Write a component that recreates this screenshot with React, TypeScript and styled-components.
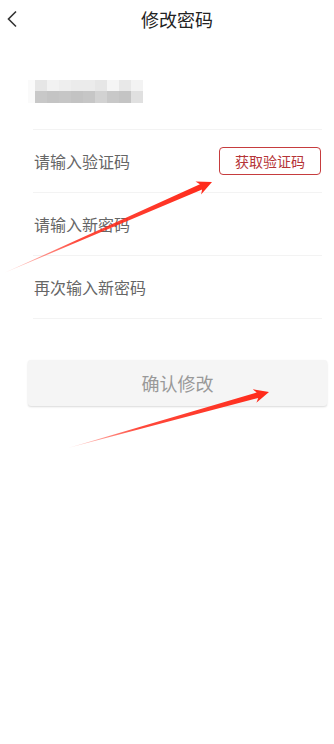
import React from 'react';
import styled, { createGlobalStyle } from 'styled-components';

const GlobalStyle = createGlobalStyle`
  html, body {
    margin: 0;
    padding: 0;
    background: #fff;
    font-family: "Noto Sans CJK SC", "Noto Sans", sans-serif;
  }
`;

const mosaic = [
  ['#fafafa', '#e6e6e6', '#f2f2f2', '#eeeeee', '#ebebeb', '#ebebeb', '#e6e6e6', '#f5f5f5', '#e8e8e8', '#f3f3f3'],
  ['#fafafa', '#c8c8c8', '#c4c4c4', '#c6c6c6', '#c3c3c3', '#c6c6c6', '#d2d2d2', '#c8c8c8', '#c4c4c4', '#e0e0e0'],
];

type Pt = [number, number];

const arrowPoints = (tail: Pt, tip: Pt) => {
  const dx = tip[0] - tail[0];
  const dy = tip[1] - tail[1];
  const len = Math.hypot(dx, dy);
  const ux = dx / len;
  const uy = dy / len;
  const nx = -uy;
  const ny = ux;
  const head = 15;
  const bx = tip[0] - ux * head;
  const by = tip[1] - uy * head;
  const p = (x: number, y: number) => `${x.toFixed(1)},${y.toFixed(1)}`;
  return [
    p(tail[0], tail[1]),
    p(bx + nx * 2.8 + ux * 3, by + ny * 2.8 + uy * 3),
    p(bx + nx * 7, by + ny * 7),
    p(tip[0], tip[1]),
    p(bx - nx * 7, by - ny * 7),
    p(bx - nx * 2.8 + ux * 3, by - ny * 2.8 + uy * 3),
  ].join(' ');
};

const App = () => {
  return (
    <Page>
      <GlobalStyle />
      <Header>
        <Back>
          <svg width="12" height="18" viewBox="0 0 12 18">
            <path d="M10 1.5 L2.5 9 L10 16.5" fill="none" stroke="#333" strokeWidth="1.6" />
          </svg>
        </Back>
        <Title>修改密码</Title>
      </Header>

      <Form>
        <PhoneRow>
          <Mosaic>
            {mosaic.map((row, r) =>
              row.map((c, i) => <Cell key={`${r}-${i}`} $first={i === 0} style={{ background: c }} />)
            )}
          </Mosaic>
        </PhoneRow>
        <Row>
          <Label>请输入验证码</Label>
          <CodeButton>获取验证码</CodeButton>
        </Row>
        <Row>
          <Label>请输入新密码</Label>
        </Row>
        <Row>
          <Label>再次输入新密码</Label>
        </Row>
      </Form>

      <Submit>确认修改</Submit>

      <Overlay width="334" height="744" viewBox="0 0 334 744">
        <defs>
          <linearGradient id="g1" x1="4" y1="273" x2="212" y2="182" gradientUnits="userSpaceOnUse">
            <stop offset="0" stopColor="#ff2a1a" stopOpacity="0.15" />
            <stop offset="0.35" stopColor="#ff2a1a" stopOpacity="0.85" />
            <stop offset="1" stopColor="#ff2a1a" />
          </linearGradient>
          <linearGradient id="g2" x1="68" y1="448" x2="269" y2="392" gradientUnits="userSpaceOnUse">
            <stop offset="0" stopColor="#ff2a1a" stopOpacity="0.15" />
            <stop offset="0.35" stopColor="#ff2a1a" stopOpacity="0.85" />
            <stop offset="1" stopColor="#ff2a1a" />
          </linearGradient>
        </defs>
        <polygon points={arrowPoints([4, 273], [212, 182])} fill="url(#g1)" />
        <polygon points={arrowPoints([68, 448], [269, 392])} fill="url(#g2)" />
      </Overlay>
    </Page>
  );
};

export default App;

const Page = styled.div`
  position: relative;
  width: 334px;
  height: 744px;
  background: #fff;
  overflow: hidden;
`;

const Header = styled.div`
  height: 40px;
  display: flex;
  align-items: center;
  justify-content: center;
  position: relative;
`;

const Back = styled.div`
  position: absolute;
  left: 6px;
  top: 10px;
  display: flex;
`;

const Title = styled.div`
  font-size: 18px;
  color: #222;
  margin: -2px 0 0 20px;
`;

const Form = styled.div`
  margin: 0 12px 0 33px;
`;

const Row = styled.div`
  height: 62px;
  display: flex;
  align-items: center;
  justify-content: space-between;
  border-bottom: 1px solid #f3f3f3;
`;

const PhoneRow = styled(Row)`
  height: 89px;
`;

const Mosaic = styled.div`
  display: grid;
  grid-template-columns: 7px repeat(9, 12px);
  grid-template-rows: 11px 12px;
  margin-left: -5px;
  margin-top: 13px;
`;

const Cell = styled.div<{ $first: boolean }>`
  width: ${(p) => (p.$first ? 7 : 12)}px;
`;

const Label = styled.div`
  font-size: 16px;
  color: #666;
  padding-left: 1px;
`;

const CodeButton = styled.div`
  width: 100px;
  height: 26px;
  border: 1px solid #c63c3e;
  border-radius: 4px;
  color: #b53437;
  font-size: 14px;
  display: flex;
  align-items: center;
  justify-content: center;
  margin-right: 1px;
`;

const Submit = styled.div`
  margin: 41px 7px 0 28px;
  height: 46px;
  background: #f5f5f5;
  border-radius: 3px;
  box-shadow: 0 1px 2px rgba(0, 0, 0, 0.15);
  color: #999;
  font-size: 18px;
  display: flex;
  align-items: center;
  justify-content: center;
`;

const Overlay = styled.svg`
  position: absolute;
  left: 0;
  top: 0;
  pointer-events: none;
`;
